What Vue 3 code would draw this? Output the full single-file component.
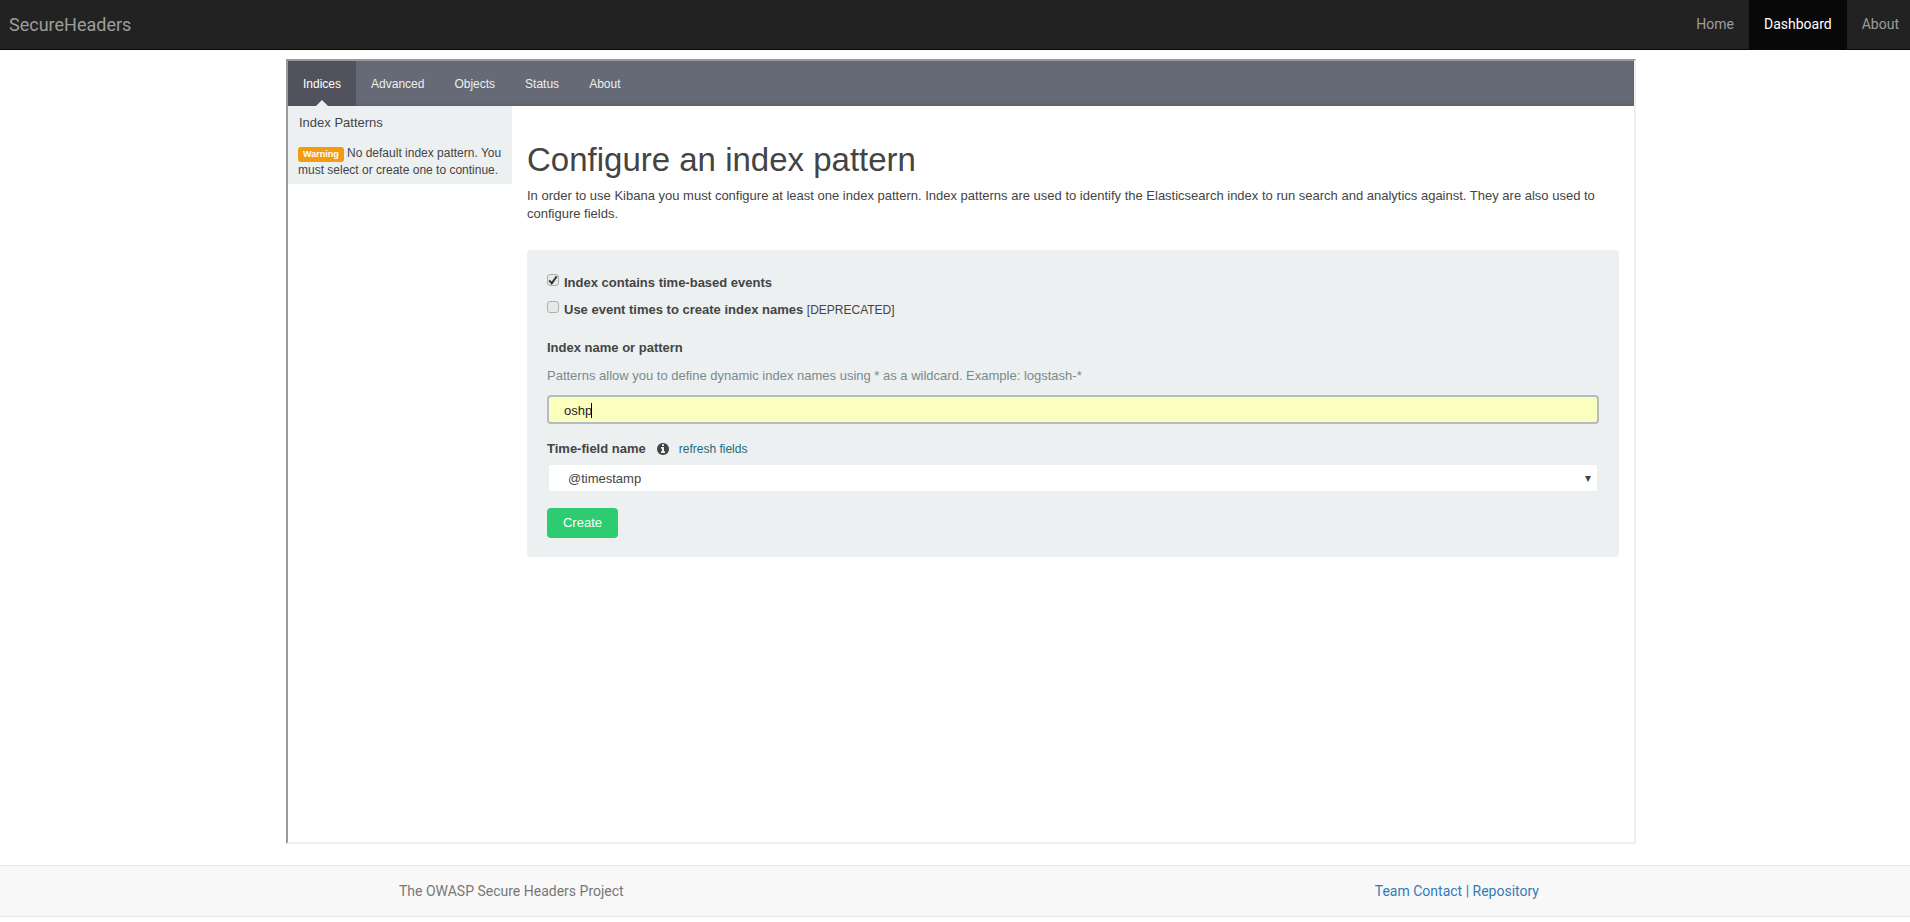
<script setup>
const tabs = ['Indices', 'Advanced', 'Objects', 'Status', 'About']
const navLinks = ['Home', 'Dashboard', 'About']
</script>

<template>
  <div class="page">
    <nav class="navbar">
      <a class="brand">SecureHeaders</a>
      <ul class="nav-links">
        <li v-for="link in navLinks" :key="link" :class="{ active: link === 'Dashboard' }">{{ link }}</li>
      </ul>
    </nav>

    <main class="frame">
      <div class="tabs">
        <a v-for="tab in tabs" :key="tab" class="tab" :class="{ current: tab === 'Indices' }">{{ tab }}</a>
      </div>

      <div class="frame-body">
        <aside class="sidebar">
          <div class="side-title">Index Patterns</div>
          <div class="side-warning">
            <span class="badge">Warning</span> No default index pattern. You must select or create one to continue.
          </div>
        </aside>

        <section class="content">
          <h1>Configure an index pattern</h1>
          <p class="intro">
            In order to use Kibana you must configure at least one index pattern. Index patterns are used to identify
            the Elasticsearch index to run search and analytics against. They are also used to configure fields.
          </p>

          <form class="panel" @submit.prevent>
            <label class="check-row first">
              <span class="check">
                <svg viewBox="0 0 12 12" width="10" height="10">
                  <path d="M1.5 6.5 L4.5 10 L10.5 1.5" fill="none" stroke="#333" stroke-width="2.4" />
                </svg>
              </span>
              <b>Index contains time-based events</b>
            </label>
            <label class="check-row second">
              <span class="check"></span>
              <b>Use event times to create index names</b>&nbsp;<span class="deprecated">[DEPRECATED]</span>
            </label>

            <div class="field-label">Index name or pattern</div>
            <div class="help">Patterns allow you to define dynamic index names using * as a wildcard. Example: logstash-*</div>
            <div class="text-input">oshp<span class="caret"></span></div>

            <div class="time-label">
              <b>Time-field name</b>
              <svg class="info" viewBox="128 128 1536 1536" width="12" height="12">
                <path fill="#444" d="M1152 1376v-160q0-14-9-23t-23-9h-96v-512q0-14-9-23t-23-9h-320q-14 0-23 9t-9 23v160q0 14 9 23t23 9h96v320h-96q-14 0-23 9t-9 23v160q0 14 9 23t23 9h448q14 0 23-9t9-23zm-128-896v-160q0-14-9-23t-23-9h-192q-14 0-23 9t-9 23v160q0 14 9 23t23 9h192q14 0 23-9t9-23zm640 416q0 209-103 385.5t-279.5 279.5-385.5 103-385.5-103-279.5-279.5-103-385.5 103-385.5 279.5-279.5 385.5-103 385.5 103 279.5 279.5 103 385.5z" />
              </svg>
              <a class="refresh">refresh fields</a>
            </div>
            <div class="select-box">
              <span>@timestamp</span>
              <span class="arrow">▾</span>
            </div>

            <button class="create" type="submit">Create</button>
          </form>
        </section>
      </div>
    </main>

    <footer class="footer">
      <span class="foot-left">The OWASP Secure Headers Project</span>
      <span class="foot-right"><a>Team Contact</a> | <a>Repository</a></span>
    </footer>
  </div>
</template>

<style>
body {
  margin: 0;
  background: #fff;
}
</style>

<style scoped>
.page {
  min-height: 922px;
  font-family: Roboto, sans-serif;
  font-size: 14px;
  color: #333;
}

.navbar {
  display: flex;
  justify-content: space-between;
  height: 49px;
  background: #222;
  border-bottom: 1px solid #080808;
}

.brand {
  padding-left: 9px;
  font-size: 18px;
  line-height: 49px;
  color: #9d9d9d;
}

.nav-links {
  display: flex;
  margin: 0;
  padding: 0;
  list-style: none;
}

.nav-links li {
  padding: 0 15px;
  line-height: 49px;
  color: #9d9d9d;
}

.nav-links li:last-child {
  padding-right: 11px;
}

.nav-links li.active {
  background: #080808;
  color: #fff;
}

.frame {
  box-sizing: border-box;
  display: flex;
  flex-direction: column;
  width: 1350px;
  height: 785px;
  margin: 9px 0 0 286px;
  border: 2px solid;
  border-color: #9a9a9a #eee #eee #9a9a9a;
  font-family: "Liberation Sans", Arial, sans-serif;
  font-size: 13px;
  color: #444;
}

.tabs {
  display: flex;
  flex: none;
  height: 45px;
  background: #656a76;
  box-shadow: inset 0 -2px 2px rgba(0, 0, 0, 0.08);
}

.tab {
  position: relative;
  padding: 1px 15px 0;
  font-size: 12px;
  line-height: 45px;
  color: #ecf0f1;
}

.tab.current {
  background: #50535e;
  color: #fff;
}

.tab.current::after {
  content: "";
  position: absolute;
  left: 50%;
  bottom: 0;
  margin-left: -6px;
  border-left: 6px solid transparent;
  border-right: 6px solid transparent;
  border-bottom: 6px solid #ecf0f1;
}

.frame-body {
  display: flex;
  flex: 1;
}

.sidebar {
  flex: none;
  align-self: flex-start;
  box-sizing: border-box;
  width: 224px;
  height: 78px;
  background: #ecf0f1;
}

.side-title {
  padding: 8px 11px 0;
  font-size: 13px;
  line-height: 18px;
}

.side-warning {
  padding: 13px 10px 0;
  font-size: 12px;
  line-height: 17px;
}

.badge {
  display: inline-block;
  padding: 0 5px;
  border-radius: 3px;
  background: #f39c12;
  color: #fff;
  font-size: 9px;
  font-weight: bold;
  line-height: 15px;
}

.content {
  flex: 1;
  padding: 0 15px;
}

h1 {
  margin: 34px 0 0;
  font-size: 33px;
  font-weight: 400;
  line-height: 40px;
}

.intro {
  margin: 7px 0 0;
  line-height: 18px;
}

.panel {
  display: flex;
  flex-direction: column;
  align-items: flex-start;
  box-sizing: border-box;
  height: 307px;
  margin-top: 27px;
  padding: 0 20px;
  border-radius: 4px;
  background: #ecf0f1;
}

.check-row {
  display: flex;
  align-items: center;
  line-height: 18px;
}

.check-row.first {
  margin-top: 24px;
}

.check-row.second {
  margin-top: 9px;
}

.check {
  box-sizing: border-box;
  display: flex;
  align-items: center;
  justify-content: center;
  width: 12px;
  height: 12px;
  margin-right: 5px;
  margin-top: -6px;
  border: 1px solid #b0b0b0;
  border-radius: 3px;
  background: #e8e8e8;
}

.deprecated {
  font-size: 12px;
}

.field-label {
  margin-top: 20px;
  font-weight: bold;
  line-height: 18px;
}

.help {
  margin-top: 10px;
  color: #7b8a8b;
  line-height: 18px;
}

.text-input {
  box-sizing: border-box;
  display: flex;
  align-items: center;
  width: 100%;
  height: 29px;
  margin-top: 10px;
  padding: 1px 0 0 15px;
  border: 2px solid #b4bcc2;
  border-radius: 4px;
  background: #fbffbd;
  color: #222;
}

.caret {
  width: 1px;
  height: 15px;
  margin-left: -1px;
  background: #000;
}

.time-label {
  display: flex;
  align-items: center;
  margin-top: 16px;
  line-height: 18px;
}

.info {
  margin: 0 10px 0 11px;
}

.refresh {
  font-size: 12px;
  color: #1f6b7a;
}

.select-box {
  box-sizing: border-box;
  display: flex;
  align-items: center;
  justify-content: space-between;
  width: 1048px;
  height: 26px;
  margin: 7px 0 0 2px;
  padding: 0 6px 0 19px;
  border-radius: 2px;
  background: #fff;
}

.arrow {
  font-size: 12px;
  color: #444;
}

.create {
  width: 71px;
  height: 30px;
  margin-top: 17px;
  padding: 0 0 2px;
  border: 0;
  border-radius: 4px;
  background: #2ecc71;
  color: #fff;
  font-family: inherit;
  font-size: 13px;
}

.footer {
  box-sizing: border-box;
  display: flex;
  justify-content: space-between;
  align-items: center;
  height: 52px;
  margin-top: 21px;
  padding: 0 371px 0 399px;
  border-top: 1px solid #e7e7e7;
  border-bottom: 1px solid #e7e7e7;
  background: #f8f8f8;
  color: #777;
}

.foot-right {
  color: #337ab7;
}
</style>
